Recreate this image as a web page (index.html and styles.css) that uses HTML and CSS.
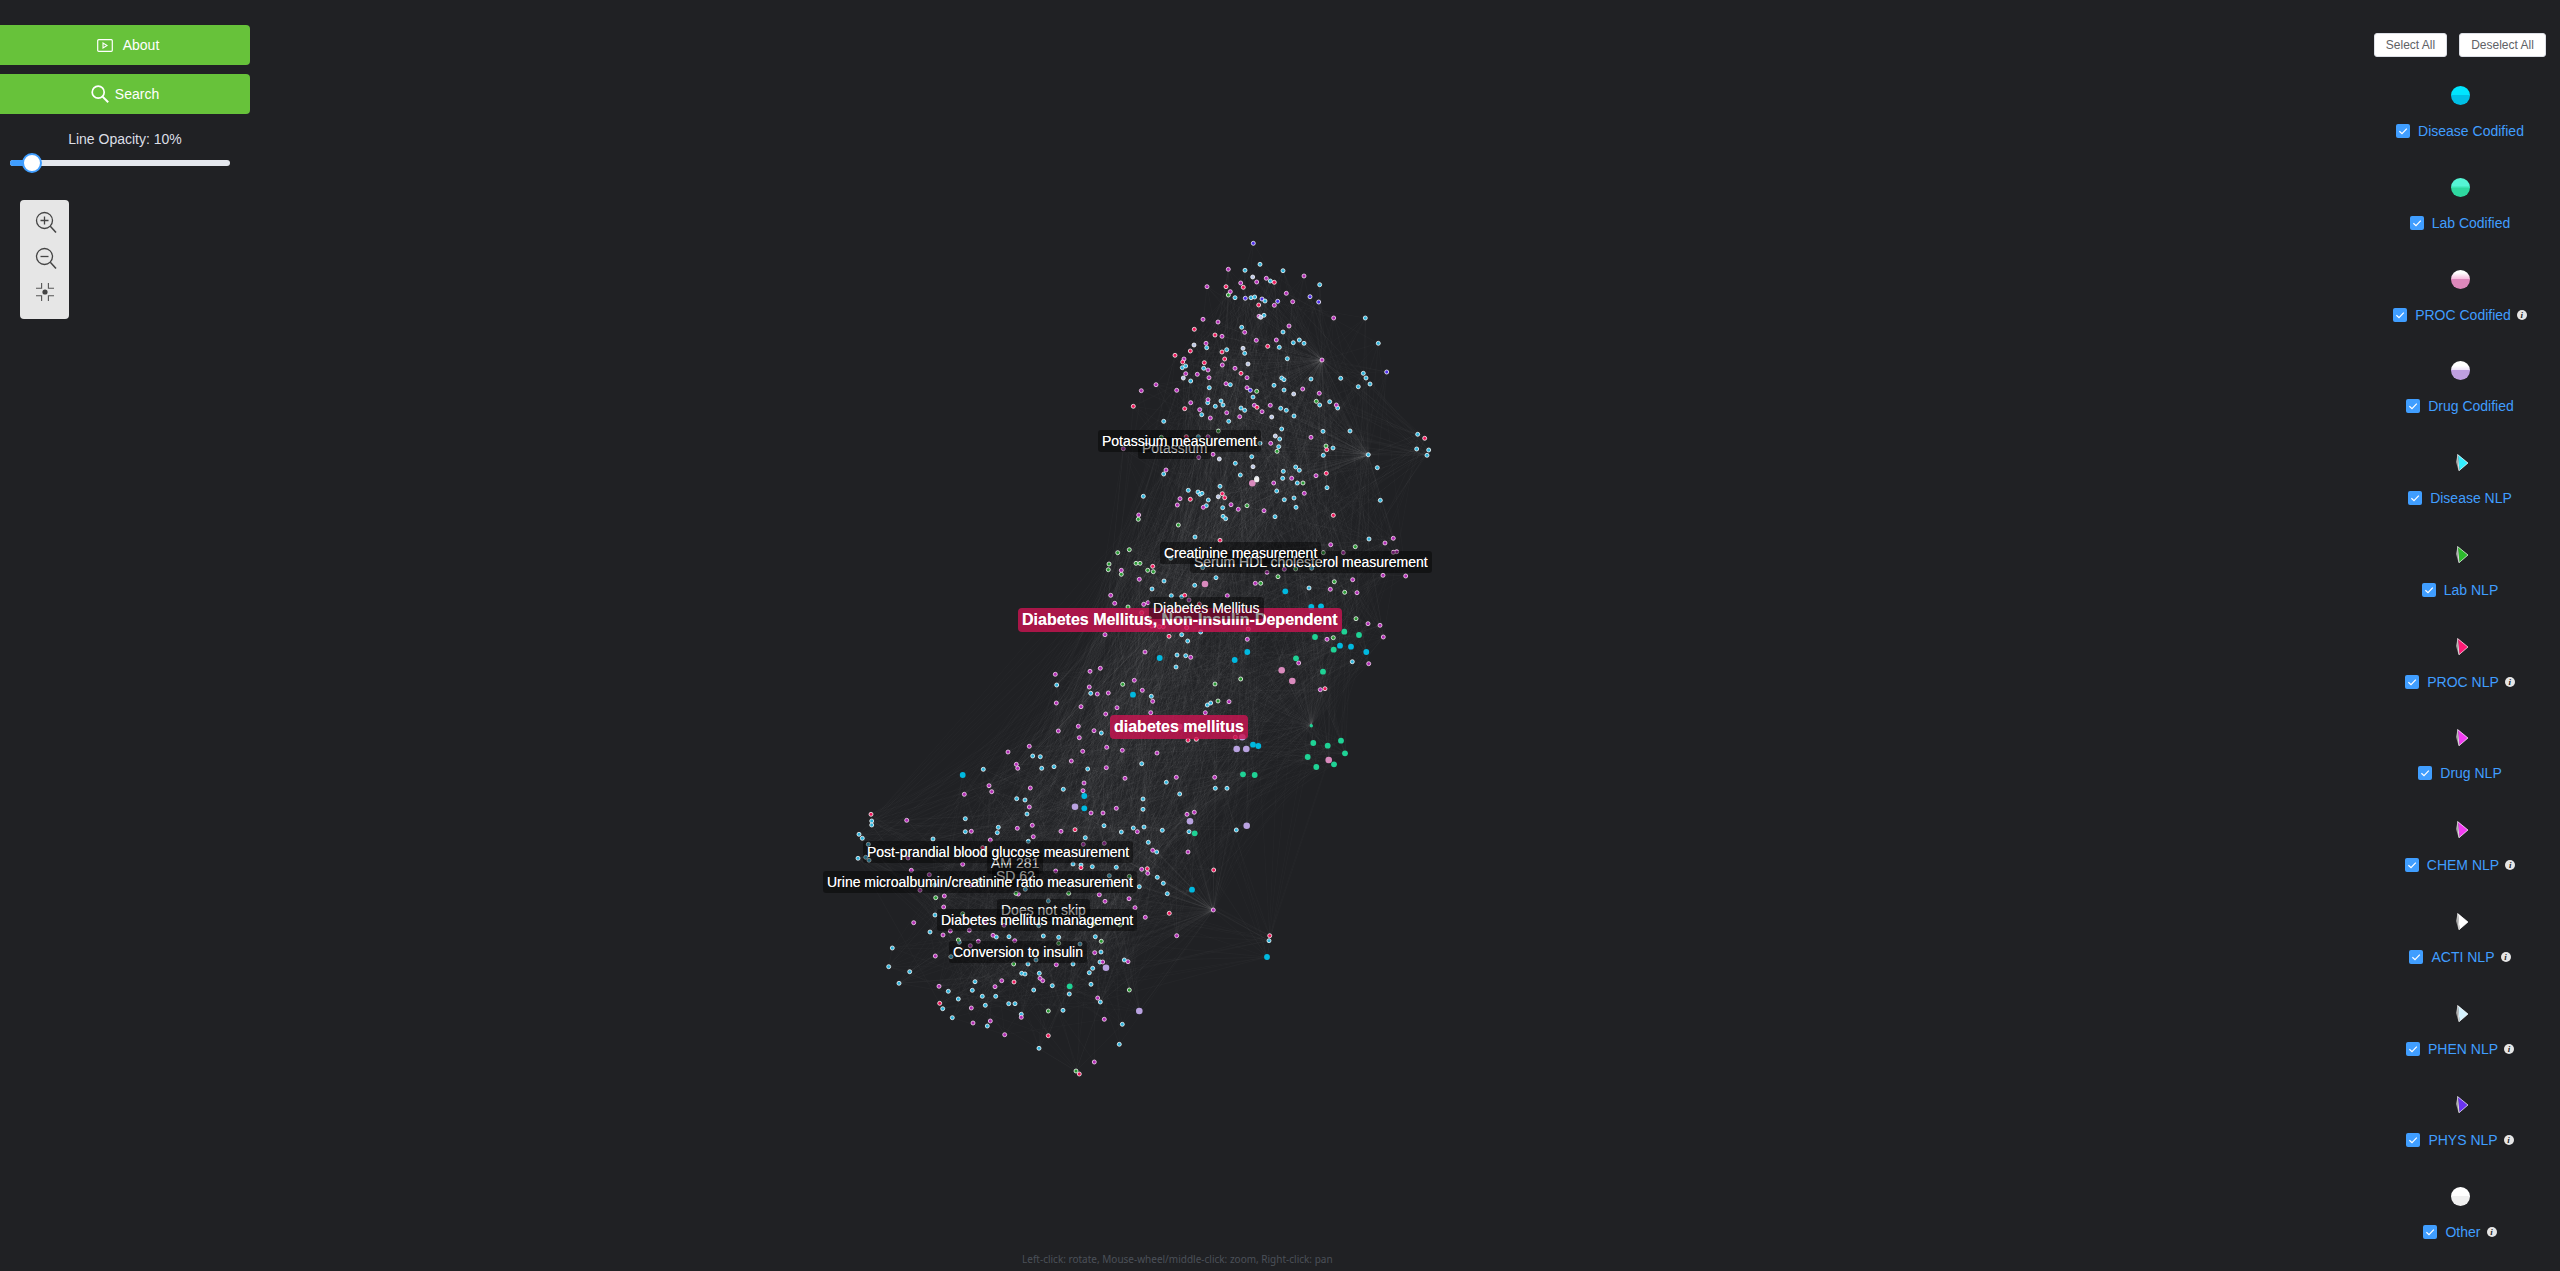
FILE: index.html
```html
<!DOCTYPE html>
<html lang="en">
<head>
<meta charset="utf-8">
<title>Knowledge graph</title>
<link rel="stylesheet" href="styles.css">
</head>
<body>
<svg class="defs" width="0" height="0" aria-hidden="true">
  <symbol id="tri" viewBox="0 0 12 17">
    <polygon points="1.5,0.5 0,8 2.5,16.5 3.5,16.5" fill="#9a9a9a"/>
    <polygon points="2,0.5 12,9 3.5,16.5" fill="currentColor"/>
    <path d="M1.5 0.5 12 9 3 16.7M1.5 0.5 3 16.7" fill="none" stroke="#fff" stroke-width=".8" stroke-opacity=".85"/>
  </symbol>
  <symbol id="check" viewBox="0 0 14 14">
    <path d="M3.4 7.2 6 9.6 10.8 4.6" fill="none" stroke="#fff" stroke-width="1.2"/>
  </symbol>
  <symbol id="glass" viewBox="0 0 24 24">
    <circle cx="9.5" cy="9.5" r="8" fill="none" stroke="currentColor" stroke-width="1.3"/>
    <path d="M15.3 15.3 21 21.6" fill="none" stroke="currentColor" stroke-width="1.5"/>
  </symbol>
</svg>

<main class="app">
  <section class="graph">
    <svg id="graph" class="graph-svg" width="2560" height="1271"></svg>
    <span class="lb lb-dim at-potassium">Potassium</span>
    <span class="lb at-potassium-m">Potassium measurement</span>
    <span class="lb at-hdl">Serum HDL cholesterol measurement</span>
    <span class="lb at-creat">Creatinine measurement</span>
    <span class="lb lb-hot at-niddm">Diabetes Mellitus, Non-Insulin-Dependent</span>
    <span class="lb lb-mid at-dm">Diabetes Mellitus</span>
    <span class="lb lb-hot at-dm2">diabetes mellitus</span>
    <span class="lb lb-dim at-am">AM 281</span>
    <span class="lb lb-dim at-sd">SD 62</span>
    <span class="lb at-post">Post-prandial blood glucose measurement</span>
    <span class="lb at-urine">Urine microalbumin/creatinine ratio measurement</span>
    <span class="lb lb-dim at-skip">Does not skip</span>
    <span class="lb at-mgmt">Diabetes mellitus management</span>
    <span class="lb at-conv">Conversion to insulin</span>
    <p class="hint">Left-click: rotate, Mouse-wheel/middle-click: zoom, Right-click: pan</p>
  </section>

  <aside class="left">
    <button class="action action-about">
      <svg width="16" height="13" viewBox="0 0 16 13"><rect x=".7" y=".7" width="14.6" height="11.6" rx="1" fill="none" stroke="#fff" stroke-width="1.2"/><path d="M6 4v5l4-2.5z" fill="none" stroke="#fff" stroke-width="1.1"/></svg>
      <span>About</span>
    </button>
    <button class="action action-search">
      <svg width="18" height="18" viewBox="0 0 18 18"><circle cx="7.2" cy="7.2" r="6" fill="none" stroke="#fff" stroke-width="1.7"/><path d="M11.6 11.6 17.2 17.2" stroke="#fff" stroke-width="2" fill="none"/></svg>
      <span>Search</span>
    </button>
    <div class="opacity-label">Line Opacity: 10%</div>
    <div class="slider"><div class="slider-fill"></div><div class="slider-thumb"></div></div>
    <div class="tools">
      <div class="tool">
        <svg class="tool-glass" width="24" height="26" viewBox="0 0 24 26"><use href="#glass" width="24" height="24"/><path d="M5.5 9.5h8M9.5 5.5v8" stroke="#444" stroke-width="1.3"/></svg>
      </div>
      <div class="tool">
        <svg class="tool-glass" width="24" height="26" viewBox="0 0 24 26"><use href="#glass" width="24" height="24"/><path d="M5.5 9.5h8" stroke="#444" stroke-width="1.3"/></svg>
      </div>
      <div class="tool">
        <svg width="20" height="20" viewBox="0 0 20 20"><circle cx="10" cy="10" r="2.6" fill="#444"/><path d="M1 6.3H6.6V1M19 6.3H13.4V1M1 13.7H6.6V19M19 13.7H13.4V19" fill="none" stroke="#555" stroke-width="1.1"/></svg>
      </div>
    </div>
  </aside>

  <aside class="right">
    <div class="all-btns">
      <button class="plain">Select All</button>
      <button class="plain">Deselect All</button>
    </div>
    <ul class="legend">
      <li class="item"><span class="dot dot-disease"></span><label class="row"><span class="box"><svg width="14" height="14"><use href="#check"/></svg></span><span>Disease Codified</span></label></li>
      <li class="item"><span class="dot dot-lab"></span><label class="row"><span class="box"><svg width="14" height="14"><use href="#check"/></svg></span><span>Lab Codified</span></label></li>
      <li class="item"><span class="dot dot-proc"></span><label class="row"><span class="box"><svg width="14" height="14"><use href="#check"/></svg></span><span>PROC Codified</span><i class="info">i</i></label></li>
      <li class="item"><span class="dot dot-drug"></span><label class="row"><span class="box"><svg width="14" height="14"><use href="#check"/></svg></span><span>Drug Codified</span></label></li>
      <li class="item"><svg class="tri t-disease" width="12" height="17"><use href="#tri"/></svg><label class="row"><span class="box"><svg width="14" height="14"><use href="#check"/></svg></span><span>Disease NLP</span></label></li>
      <li class="item"><svg class="tri t-lab" width="12" height="17"><use href="#tri"/></svg><label class="row"><span class="box"><svg width="14" height="14"><use href="#check"/></svg></span><span>Lab NLP</span></label></li>
      <li class="item"><svg class="tri t-proc" width="12" height="17"><use href="#tri"/></svg><label class="row"><span class="box"><svg width="14" height="14"><use href="#check"/></svg></span><span>PROC NLP</span><i class="info">i</i></label></li>
      <li class="item"><svg class="tri t-drug" width="12" height="17"><use href="#tri"/></svg><label class="row"><span class="box"><svg width="14" height="14"><use href="#check"/></svg></span><span>Drug NLP</span></label></li>
      <li class="item"><svg class="tri t-drug" width="12" height="17"><use href="#tri"/></svg><label class="row"><span class="box"><svg width="14" height="14"><use href="#check"/></svg></span><span>CHEM NLP</span><i class="info">i</i></label></li>
      <li class="item"><svg class="tri t-acti" width="12" height="17"><use href="#tri"/></svg><label class="row"><span class="box"><svg width="14" height="14"><use href="#check"/></svg></span><span>ACTI NLP</span><i class="info">i</i></label></li>
      <li class="item"><svg class="tri t-phen" width="12" height="17"><use href="#tri"/></svg><label class="row"><span class="box"><svg width="14" height="14"><use href="#check"/></svg></span><span>PHEN NLP</span><i class="info">i</i></label></li>
      <li class="item"><svg class="tri t-phys" width="12" height="17"><use href="#tri"/></svg><label class="row"><span class="box"><svg width="14" height="14"><use href="#check"/></svg></span><span>PHYS NLP</span><i class="info">i</i></label></li>
      <li class="item"><span class="dot dot-other"></span><label class="row"><span class="box"><svg width="14" height="14"><use href="#check"/></svg></span><span>Other</span><i class="info">i</i></label></li>
    </ul>
  </aside>
</main>
<script src="graph.js"></script>
</body>
</html>
```
FILE: styles.css
```css
* { box-sizing: border-box; }
html, body { margin: 0; height: 100%; overflow: hidden; }
body { background: #202124; font-family: "Liberation Sans", Arial, sans-serif; font-size: 14px; }
.defs { position: absolute; }
.app { position: relative; height: 100vh; display: flex; justify-content: space-between; align-items: flex-start; }

/* free canvas */
.graph { position: absolute; inset: 0; }
.graph-svg { display: block; }
.n { stroke: rgba(255,255,255,.85); stroke-width: .9; }
.c { fill: #2fb4dc; }
.m { fill: #b02cb4; stroke: rgba(255,225,250,.85); }
.r { fill: #f0185c; }
.g { fill: #2a9a34; }
.p { fill: #5030ee; }
.l { fill: #b8c4e4; }
.big { stroke: none; }
.teal { fill: #1fd295; }
.cyan { fill: #00b9e0; }
.lilac { fill: #b9a2e0; }
.pink { fill: #d98abd; }
.white { fill: #eeeeee; }
.edge { stroke: rgba(255,255,255,.02); stroke-width: 1; }

.lb { position: absolute; padding: 0 4px; height: 22px; line-height: 22px; color: #fff; white-space: nowrap; background: rgba(0,0,0,.42); border-radius: 3px; font-size: 14px; text-shadow: 0 0 .6px rgba(255,255,255,.7); }
.lb-dim { color: rgba(255,255,255,.78); }
.lb-mid { color: rgba(255,255,255,.9); }
.lb-hot { background: rgba(200,20,80,.82); font-weight: 700; font-size: 16px; height: 24px; line-height: 24px; border-radius: 4px; }
.at-potassium { left: 1138px; top: 437px; }
.at-potassium-m { left: 1098px; top: 430px; }
.at-hdl { left: 1190px; top: 551px; }
.at-creat { left: 1160px; top: 542px; }
.at-niddm { left: 1018px; top: 608px; }
.at-dm { left: 1149px; top: 597px; }
.at-dm2 { left: 1110px; top: 715px; }
.at-am { left: 987px; top: 852px; }
.at-sd { left: 992px; top: 865px; }
.at-post { left: 863px; top: 841px; }
.at-urine { left: 823px; top: 871px; }
.at-skip { left: 997px; top: 899px; }
.at-mgmt { left: 937px; top: 909px; }
.at-conv { left: 949px; top: 941px; }
.hint { position: absolute; margin: 0; left: 1022px; top: 1251px; color: #4b5058; font: 10px/16px "Noto Sans", sans-serif; white-space: nowrap; }

/* left panel */
.left { position: relative; width: 250px; padding-top: 25px; }
.action { display: flex; align-items: center; justify-content: center; gap: 10px; width: 250px; height: 40px; margin: 0 0 9px; padding: 0; border: 0; border-radius: 0 4px 4px 0; background: #67c23a; color: #fff; font: 14px "Liberation Sans", Arial, sans-serif; }
.action-about { padding-left: 6px; }
.action-search { gap: 6px; }
.opacity-label { margin-top: 15px; height: 20px; line-height: 20px; text-align: center; color: #dcdfe6; }
.slider { position: relative; width: 220px; height: 6px; margin: 11px 0 0 10px; background: #e4e7ed; border-radius: 3px; }
.slider-fill { width: 22px; height: 6px; background: #409eff; border-radius: 3px 0 0 3px; }
.slider-thumb { position: absolute; left: 12px; top: -7px; width: 20px; height: 20px; background: #fff; border: 2px solid #409eff; border-radius: 50%; }
.tools { width: 49px; height: 119px; margin: 34px 0 0 20px; padding-top: 2px; background: #e6e6e6; border-radius: 4px; color: #444; }
.tool { height: 36px; display: flex; align-items: center; justify-content: center; }
.tool svg { display: block; }
.tool .tool-glass { margin: 7.6px 0 0 5px; }

/* right panel */
.right { position: relative; width: 200px; padding-top: 33px; }
.all-btns { display: flex; justify-content: flex-end; gap: 12px; padding-right: 14px; }
.plain { height: 24px; padding: 0; background: #fff; border: 1px solid #dcdfe6; border-radius: 3px; color: #606266; font: 12px "Liberation Sans", Arial, sans-serif; }
.plain:first-child { width: 73px; }
.plain:last-child { width: 87px; }
.legend { list-style: none; margin: 28px 0 0; padding: 0; }
.item { height: 91.75px; display: flex; flex-direction: column; align-items: center; }
.dot { display: block; width: 19px; height: 19px; margin-top: 1px; margin-bottom: 16px; border-radius: 50%; }
.dot-disease { background: linear-gradient(#00e6ff 50%, #00c0e6 50%); }
.dot-lab { background: linear-gradient(#55f5d5 40%, #2ed9a0 55%); }
.dot-proc { background: linear-gradient(#fff 15%, #f8c0e0 45%, #dd88bb 50%); }
.dot-drug { background: linear-gradient(#fff 25%, #efe4fa 45%, #bf9fe0 50%); }
.dot-other { background: linear-gradient(#fff 50%, #f0f0f0 50%); }
.tri { display: block; margin: 2px 0 17px 4px; }
.t-disease { color: #33eeff; }
.t-lab { color: #2cba2c; }
.t-proc { color: #ff1a75; }
.t-drug { color: #f23cf2; }
.t-acti { color: #ffffff; }
.t-phen { color: #d5f3ff; }
.t-phys { color: #6a33f0; }
.row { display: flex; align-items: center; height: 20px; color: #409eff; }
.box { display: block; width: 14px; height: 14px; margin-right: 8px; background: #409eff; border-radius: 2px; }
.box svg { display: block; }
.info { display: block; width: 10px; height: 10px; margin-left: 6px; border-radius: 50%; background: #e6e6e6; color: #222; font: italic 700 9px/10px "Liberation Serif", serif; text-align: center; }
```
FILE: graph.js
```js
var NS = 'http://www.w3.org/2000/svg';
var svg = document.getElementById('graph');
var nodes = [];
function add(ox, oy, cls, big, str) {
  var v = str.trim().split(/[\s,;]+/).map(Number);
  for (var i = 0; i + 1 < v.length; i += 2) {
    nodes.push({ x: ox + v[i] / 3, y: oy + v[i + 1] / 3, cls: cls, big: big });
  }
}
// crop A: upper cluster
add(1050,220,'p',0,'610 70 586 235 636 237 683 244 780 230 806 246 601 511 1010 456');
add(1050,220,'c',0,'630 133 585 151 699 152 809 194 661 183 555 233 603 233 614 231 645 243 642 286 575 322 699 336 688 382 730 368 748 360 762 370 985 370 946 294 470 383 530 389 584 400 712 416 397 443 407 438 461 445 422 483 478 503 541 494 695 474 702 479 783 477 872 475 940 460 948 474 960 492 925 500 672 496 702 510 609 531 513 543 519 555 496 559 839 545 809 555 863 564 573 564 584 571 692 565 709 571 455 584 732 588 536 604 341 604 695 627 819 634 900 633 689 657 686 680 849 684 820 706 605 710 955 704 1103 643 1100 687 1136 690 1131 706 982 743 556 730 737 741 748 751 700 754 571 765 341 762 698 775 473 548 445 650 630 670');
add(1050,220,'m',0,'535 148 620 186 762 168 471 200 541 215 709 220 728 245 673 256 627 289 851 294 717 318 584 337 516 349 468 370 402 417 474 450 407 461 442 463 477 473 517 435 555 445 591 473 528 491 591 503 758 507 808 520 318 494 380 511 422 548 449 569 474 539 530 578 481 594 569 590 613 556 661 556 636 575 859 555 662 670 489 703 783 652 348 750 798 767 725 775 816 420 274 512 459 298 504 306 619 361 679 360 572 189 649 175 474 650 220 686 446 712');
add(1050,220,'r',0,'528 200 580 202 673 187 626 255 495 345 653 379 375 406 421 393 516 396 524 417 463 428 398 426 433 328 573 460 404 566 621 562 250 559 830 689 829 760 1124 655 409 650');
add(1050,220,'g',0,'535 225 620 514 799 544 828 678 681 694 505 633 334 652');
add(1050,220,'l',0,'608 171 632 292 432 375 579 385 594 432 400 474 731 522 665 591 676 648 508 717 609 740 620 775');
// crop B: waist strip
add(1050,470,'c',0,'510 49 415 61 444 66 450 73 456 70 475 90 469 107 518 113 519 139 527 146 680 63 703 89 732 84 738 112 831 53 742 39 280 79 991 91 675 140');
add(1050,470,'r',0,'517 71 524 83 421 88 850 136');
add(1050,470,'m',0,'390 86 382 105 460 112 543 104 565 118 642 122 763 70 266 135 671 39');
add(1050,470,'l',0,'505 80');
add(1050,470,'g',0,'591 107 759 39 265 148 385 165');
add(1050,470,'pink',1,'607 40');
add(1050,470,'white',1,'620 29');
// crop C: centre
add(1000,520,'g',0,'353 98 388 89 327 132 325 149 364 163 408 130 420 130 443 151 460 155 384 261 782 190 834 170 1003 185 1034 217 1066 80 1068 296 1000 353 368 493 645 492 722 477 654 543 970 98 887 147');
add(1000,520,'c',0,'585 51 1107 57 492 183 648 173 584 196 456 207 927 204 514 227 545 230 563 363 545 344 602 336 531 405 557 407 528 441 1057 425 170 495 272 520 304 639 454 529 622 555 632 549 98 708 121 710 125 745 162 740 263 747 425 731 512 115 608 143 935 145');
add(1000,520,'m',0,'992 74 1155 69 1180 55 1190 95 1180 97 1030 98 801 157 853 148 1149 166 1217 168 1058 179 364 151 418 178 766 190 991 208 1071 218 332 226 344 250 431 253 444 248 682 227 567 240 1104 311 1140 316 1150 351 315 344 981 358 742 358 435 396 572 412 896 429 1106 431 166 463 270 454 301 445 268 501 292 522 325 519 403 481 427 511 458 544 169 549 243 560 351 563 317 582 452 578 616 578 687 545 961 509 235 619 175 633 282 632 238 653 320 682 248 694 88 679 24 696 214 723 49 733 53 745 319 743 367 691 471 699 375 775 529 772 644 772');
add(1000,520,'r',0,'660 61 458 139 554 226 598 252 507 349 975 506 564 661 589 658 745 327 425 278 455 318 478 320 490 320 560 323 706 652');
add(1000,520,'teal',1,'1033 335 945 351 1077 345 1001 389 888 415 969 455 940 669 983 677 1023 662 923 711 1035 700 949 741 1002 733 729 763 764 765');
add(1000,520,'cyan',1,'856 214 934 261 963 259 1020 377 1053 380 1099 396 479 414 742 396 704 420 399 524 759 674 775 678');
add(1000,520,'pink',1,'615 192 845 451 877 483 986 720 538 620');
add(1000,520,'lilac',1,'710 687 739 687 727 652');
// crop D: lower cluster
add(800,780,'c',0,'1099 7 790 28 1246 25 1281 25 1139 42 1029 57 650 56 675 60 1029 88 681 102 496 116 215 123 215 135 595 142 592 158 496 155 912 137 964 156 1000 144 1032 141 1087 151 1167 155 1309 150 177 163 187 175 399 177 856 173 685 184 1045 187 1070 216 205 193 174 235 197 232 207 241 819 252 843 255 877 260 949 262 1072 292 1090 310 1018 320 1102 341 928 287 676 328 404 315 745 363 405 405 390 456 716 437 589 471 627 470 730 468 776 472 886 470 478 487 840 492 277 504 903 516 453 530 708 540 266 560 329 575 297 610 525 605 445 634 517 631 547 649 587 649 475 657 556 676 428 686 626 671 645 671 457 713 562 738 664 703 717 805 958 793 967 733 901 666 873 613 757 617 701 630 808 642 789 691 684 552 819 552 868 578 878 565 718 580 665 580 675 582 900 546 973 540');
add(800,780,'m',0,'567 17 575 35 691 24 852 9 849 32 493 43 688 81 873 99 909 99 1183 97 1161 103 949 85 320 121 514 154 652 145 697 136 783 154 700 170 1012 155 571 180 850 193 913 190 1058 211 1164 216 324 234 488 253 334 271 388 284 767 273 512 316 360 331 433 348 655 342 898 344 987 356 915 364 1005 383 1036 412 431 381 341 428 555 428 612 436 429 465 451 453 508 451 579 466 1130 467 535 484 644 482 511 497 406 528 884 518 769 554 908 546 984 545 605 602 585 620 417 619 893 654 514 684 664 712 913 718 519 729 571 723 614 764 883 846 728 602 720 595 1240 390 1043 280 1025 268');
add(800,780,'r',0,'213 103 825 149 548 203 1042 266 1241 270 1108 400 419 670 642 606 745 767 838 882 843 263');
add(800,780,'g',0,'407 353 806 340 648 340 988 289 540 300 488 401 960 435 475 480 776 490 904 484 641 552 988 630 745 693 828 873 880 432');
add(800,780,'cyan',1,'853 48 853 85 1176 329');
add(800,780,'lilac',1,'825 80 1170 124 1340 137 918 563 1018 693');
add(800,780,'teal',1,'1184 160 809 619');
// stragglers
add(1220,770,'r',0,'149 497');
add(1220,770,'c',0,'147 512');
add(1220,770,'cyan',1,'141 561');
add(840,760,'c',0,'430 28');
add(840,760,'cyan',1,'368 45');
add(1000,520,'teal',2,'934 617');

// visible fan-out hubs seen in the picture
var hubs = [[1322,360],[1368,455],[1213,910],[1311,725]];
var seed = 12345;
function rnd() { seed = (seed * 1103515245 + 12345) % 2147483648; return seed / 2147483648; }
function el(name, attrs) {
  var e = document.createElementNS(NS, name);
  for (var k in attrs) e.setAttribute(k, attrs[k]);
  svg.appendChild(e);
}
function line(a, b) {
  el('line', { x1: a.x, y1: a.y, x2: b[0], y2: b[1], 'class': 'edge' });
}
nodes.forEach(function (a) {
  hubs.forEach(function (h) {
    var q = Math.hypot(h[0] - a.x, h[1] - a.y);
    if (q < 170) line(a, h);
  });
  var k = (a.y > 420 && a.y < 1020) ? 9 : 4;
  var reach = (a.y > 420 && a.y < 1020) ? 420 : 180;
  for (var i = 0; i < k; i++) {
    var o = nodes[Math.floor(rnd() * nodes.length)];
    if (Math.hypot(o.x - a.x, o.y - a.y) < reach) line(a, [o.x, o.y]);
  }
});
nodes.forEach(function (a) {
  var r = a.big === 2 ? 1.7 : a.big ? (a.cls === 'teal' || a.cls === 'cyan' ? 2.9 : a.cls === 'white' ? 2.6 : 3.3) : 2;
  el('circle', { cx: a.x.toFixed(1), cy: a.y.toFixed(1), r: r, 'class': (a.big ? 'big ' : 'n ') + a.cls });
});
```
